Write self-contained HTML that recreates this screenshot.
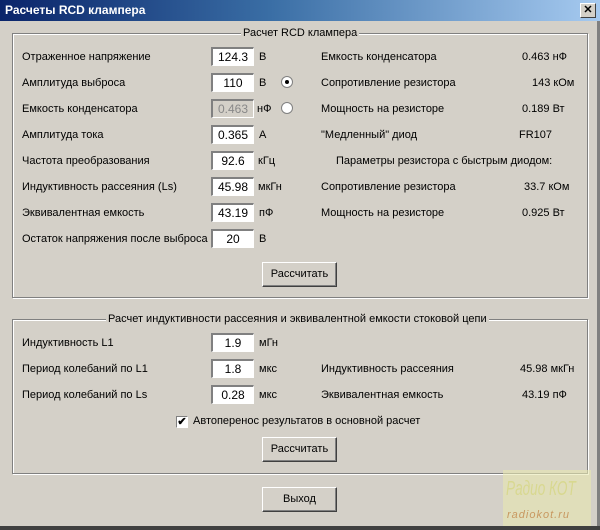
<!DOCTYPE html>
<html><head><meta charset="utf-8"><style>
body{margin:0;width:600px;height:530px;background:#d4d0c8;position:relative;overflow:hidden;font-family:"Liberation Sans",sans-serif;font-size:11px;color:#000}
div,span{position:absolute}
.t{white-space:nowrap;line-height:13px}
.title{left:0;top:0;width:600px;height:21px;background:linear-gradient(90deg,#0a246a 0%,#3a6ea5 45%,#a6caf0 100%)}
.grp{border:1px solid #808080;box-shadow:1px 1px 0 #fff, inset 1px 1px 0 #fff}
.lg{background:#d4d0c8;padding:0 2px}
.in{width:40px;height:16px;background:#fff;border-top:2px solid #808080;border-left:2px solid #808080;border-right:1px solid #fff;border-bottom:1px solid #fff;text-align:center;line-height:16px;font-size:12px}
.dis{background:#d4d0c8;color:#888}
.btn{width:73px;height:23px;background:#d4d0c8;border:1px solid #fff;border-right-color:#404040;border-bottom-color:#404040;box-shadow:inset -1px -1px 0 #808080;text-align:center;line-height:23px}
.rad{width:10px;height:10px;border-radius:50%;background:#fff;border:1px solid #808080}
</style></head><body>
<div class="title"></div>
<div class="t" style="left:5px;top:4px;color:#fff;font-weight:bold;font-size:12px">Расчеты RCD клампера</div>
<div style="left:580px;top:3px;width:14px;height:13px;background:#d4d0c8;border:1px solid #fff;border-right-color:#404040;border-bottom-color:#404040;text-align:center;font-weight:bold;font-size:11px;line-height:13px">✕</div>
<div style="left:597px;top:21px;width:3px;height:509px;background:#808080"></div>
<div style="left:0;top:526px;width:600px;height:4px;background:#404040"></div>

<div class="grp" style="left:12px;top:33px;width:574px;height:263px"></div>
<div class="t lg" style="left:241px;top:27px">Расчет RCD клампера</div>

<div class="t" style="left:22px;top:51px">Отраженное напряжение</div>
<div class="t" style="left:22px;top:77px">Амплитуда выброса</div>
<div class="t" style="left:22px;top:103px">Емкость конденсатора</div>
<div class="t" style="left:22px;top:129px">Амплитуда тока</div>
<div class="t" style="left:22px;top:155px">Частота преобразования</div>
<div class="t" style="left:22px;top:181px">Индуктивность рассеяния (Ls)</div>
<div class="t" style="left:22px;top:207px">Эквивалентная емкость</div>
<div class="t" style="left:22px;top:233px">Остаток напряжения после выброса</div>

<div class="in" style="left:211px;top:47px">124.3</div>
<div class="in" style="left:211px;top:73px">110</div>
<div class="in dis" style="left:211px;top:99px">0.463</div>
<div class="in" style="left:211px;top:125px">0.365</div>
<div class="in" style="left:211px;top:151px">92.6</div>
<div class="in" style="left:211px;top:177px">45.98</div>
<div class="in" style="left:211px;top:203px">43.19</div>
<div class="in" style="left:211px;top:229px">20</div>

<div class="t" style="left:259px;top:51px">В</div>
<div class="t" style="left:259px;top:77px">В</div>
<div class="t" style="left:257px;top:103px">нФ</div>
<div class="t" style="left:259px;top:129px">А</div>
<div class="t" style="left:258px;top:155px">кГц</div>
<div class="t" style="left:258px;top:181px">мкГн</div>
<div class="t" style="left:259px;top:207px">пФ</div>
<div class="t" style="left:259px;top:233px">В</div>

<div class="rad" style="left:281px;top:76px"><span style="left:3px;top:3px;width:4px;height:4px;border-radius:50%;background:#000"></span></div>
<div class="rad" style="left:281px;top:102px"></div>

<div class="t" style="left:321px;top:51px">Емкость конденсатора</div>
<div class="t" style="left:321px;top:77px">Сопротивление резистора</div>
<div class="t" style="left:321px;top:103px">Мощность на резисторе</div>
<div class="t" style="left:321px;top:129px">"Медленный" диод</div>
<div class="t" style="left:336px;top:155px">Параметры резистора с быстрым диодом:</div>
<div class="t" style="left:321px;top:181px">Сопротивление резистора</div>
<div class="t" style="left:321px;top:207px">Мощность на резисторе</div>

<div class="t" style="left:522px;top:51px">0.463 нФ</div>
<div class="t" style="left:532px;top:77px">143 кОм</div>
<div class="t" style="left:522px;top:103px">0.189 Вт</div>
<div class="t" style="left:519px;top:129px">FR107</div>
<div class="t" style="left:524px;top:181px">33.7 кОм</div>
<div class="t" style="left:522px;top:207px">0.925 Вт</div>

<div class="btn" style="left:262px;top:262px">Рассчитать</div>

<div class="grp" style="left:12px;top:319px;width:574px;height:153px"></div>
<div class="t lg" style="left:106px;top:313px">Расчет индуктивности рассеяния и эквивалентной емкости стоковой цепи</div>

<div class="t" style="left:22px;top:337px">Индуктивность L1</div>
<div class="t" style="left:22px;top:363px">Период колебаний по L1</div>
<div class="t" style="left:22px;top:389px">Период колебаний по Ls</div>
<div class="in" style="left:211px;top:333px">1.9</div>
<div class="in" style="left:211px;top:359px">1.8</div>
<div class="in" style="left:211px;top:385px">0.28</div>
<div class="t" style="left:259px;top:337px">мГн</div>
<div class="t" style="left:259px;top:363px">мкс</div>
<div class="t" style="left:259px;top:389px">мкс</div>
<div class="t" style="left:321px;top:363px">Индуктивность рассеяния</div>
<div class="t" style="left:321px;top:389px">Эквивалентная емкость</div>
<div class="t" style="left:520px;top:363px">45.98 мкГн</div>
<div class="t" style="left:522px;top:389px">43.19 пФ</div>

<div style="left:176px;top:416px;width:10px;height:10px;background:#fff;border-top:1px solid #808080;border-left:1px solid #808080;border-right:1px solid #fff;border-bottom:1px solid #fff;font-size:11px;line-height:10px;text-align:center;font-weight:bold">✔</div>
<div class="t" style="left:193px;top:415px">Автоперенос результатов в основной расчет</div>
<div class="btn" style="left:262px;top:437px">Рассчитать</div>

<div class="btn" style="left:262px;top:487px">Выход</div>

<div style="left:503px;top:470px;width:88px;height:56px;background:#e8e8b0;opacity:.6"></div>
<div class="t" style="left:506px;top:478px;color:#d8d890;font-size:20px;line-height:22px;font-style:italic;transform:scaleX(0.68);transform-origin:0 0">Радио КОТ</div>
<div class="t" style="left:507px;top:509px;color:#c89860;font-size:11px;font-style:italic;letter-spacing:1px">radiokot.ru</div>
</body></html>
